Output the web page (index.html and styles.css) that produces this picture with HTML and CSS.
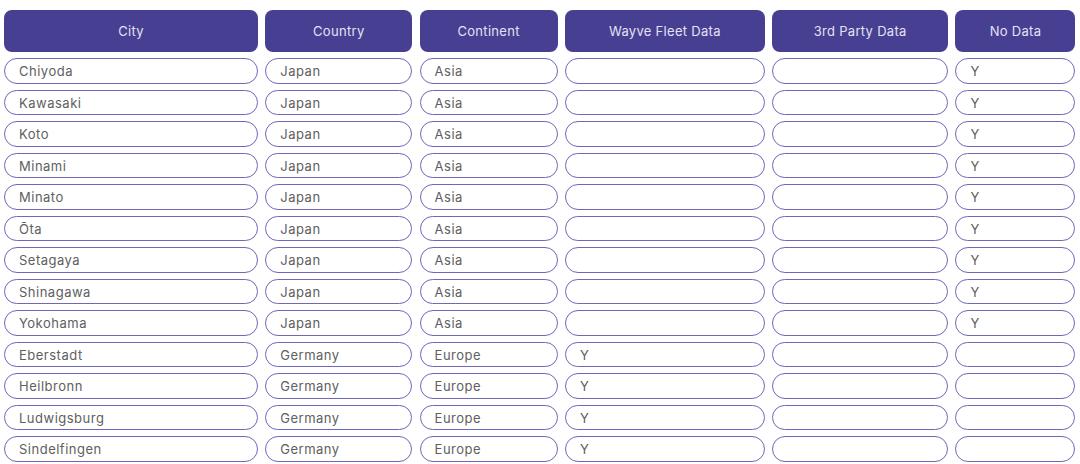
FILE: index.html
```html
<!DOCTYPE html>
<html>
<head>
<meta charset="utf-8">
<link rel="stylesheet" href="styles.css">
</head>
<body>
<div class="table">
  <div class="th">City</div><div class="th">Country</div><div class="th">Continent</div><div class="th">Wayve Fleet Data</div><div class="th">3rd Party Data</div><div class="th">No Data</div>

  <div class="td">Chiyoda</div><div class="td">Japan</div><div class="td">Asia</div><div class="td"></div><div class="td"></div><div class="td">Y</div>
  <div class="td">Kawasaki</div><div class="td">Japan</div><div class="td">Asia</div><div class="td"></div><div class="td"></div><div class="td">Y</div>
  <div class="td">Koto</div><div class="td">Japan</div><div class="td">Asia</div><div class="td"></div><div class="td"></div><div class="td">Y</div>
  <div class="td">Minami</div><div class="td">Japan</div><div class="td">Asia</div><div class="td"></div><div class="td"></div><div class="td">Y</div>
  <div class="td">Minato</div><div class="td">Japan</div><div class="td">Asia</div><div class="td"></div><div class="td"></div><div class="td">Y</div>
  <div class="td">Ōta</div><div class="td">Japan</div><div class="td">Asia</div><div class="td"></div><div class="td"></div><div class="td">Y</div>
  <div class="td">Setagaya</div><div class="td">Japan</div><div class="td">Asia</div><div class="td"></div><div class="td"></div><div class="td">Y</div>
  <div class="td">Shinagawa</div><div class="td">Japan</div><div class="td">Asia</div><div class="td"></div><div class="td"></div><div class="td">Y</div>
  <div class="td">Yokohama</div><div class="td">Japan</div><div class="td">Asia</div><div class="td"></div><div class="td"></div><div class="td">Y</div>
  <div class="td">Eberstadt</div><div class="td">Germany</div><div class="td">Europe</div><div class="td">Y</div><div class="td"></div><div class="td"></div>
  <div class="td">Heilbronn</div><div class="td">Germany</div><div class="td">Europe</div><div class="td">Y</div><div class="td"></div><div class="td"></div>
  <div class="td">Ludwigsburg</div><div class="td">Germany</div><div class="td">Europe</div><div class="td">Y</div><div class="td"></div><div class="td"></div>
  <div class="td">Sindelfingen</div><div class="td">Germany</div><div class="td">Europe</div><div class="td">Y</div><div class="td"></div><div class="td"></div>
</div>
</body>
</html>
```
FILE: styles.css
```css
* { box-sizing: border-box; }
html, body { background: #ffffff; }
body {
  margin: 10px 0 0 4px;
  font-family: Inter, "Noto Sans", sans-serif;
  font-size: 13px;
}
.table {
  display: grid;
  grid-template-columns: 254px 147px 138px 200px 176px 120px;
  grid-template-rows: 42px;
  grid-auto-rows: 25.5px;
  column-gap: 7.3px;
  row-gap: 6px;
}
.th {
  background: #463f92;
  color: #e4e2f2;
  border-radius: 8px;
  display: flex;
  align-items: center;
  justify-content: center;
  letter-spacing: 0.3px;
}
.td {
  border: 1.5px solid #6e67ba;
  border-radius: 13px;
  display: flex;
  align-items: center;
  padding: 1px 0 0 14px;
  color: #606060;
  letter-spacing: 0.5px;
}
```
